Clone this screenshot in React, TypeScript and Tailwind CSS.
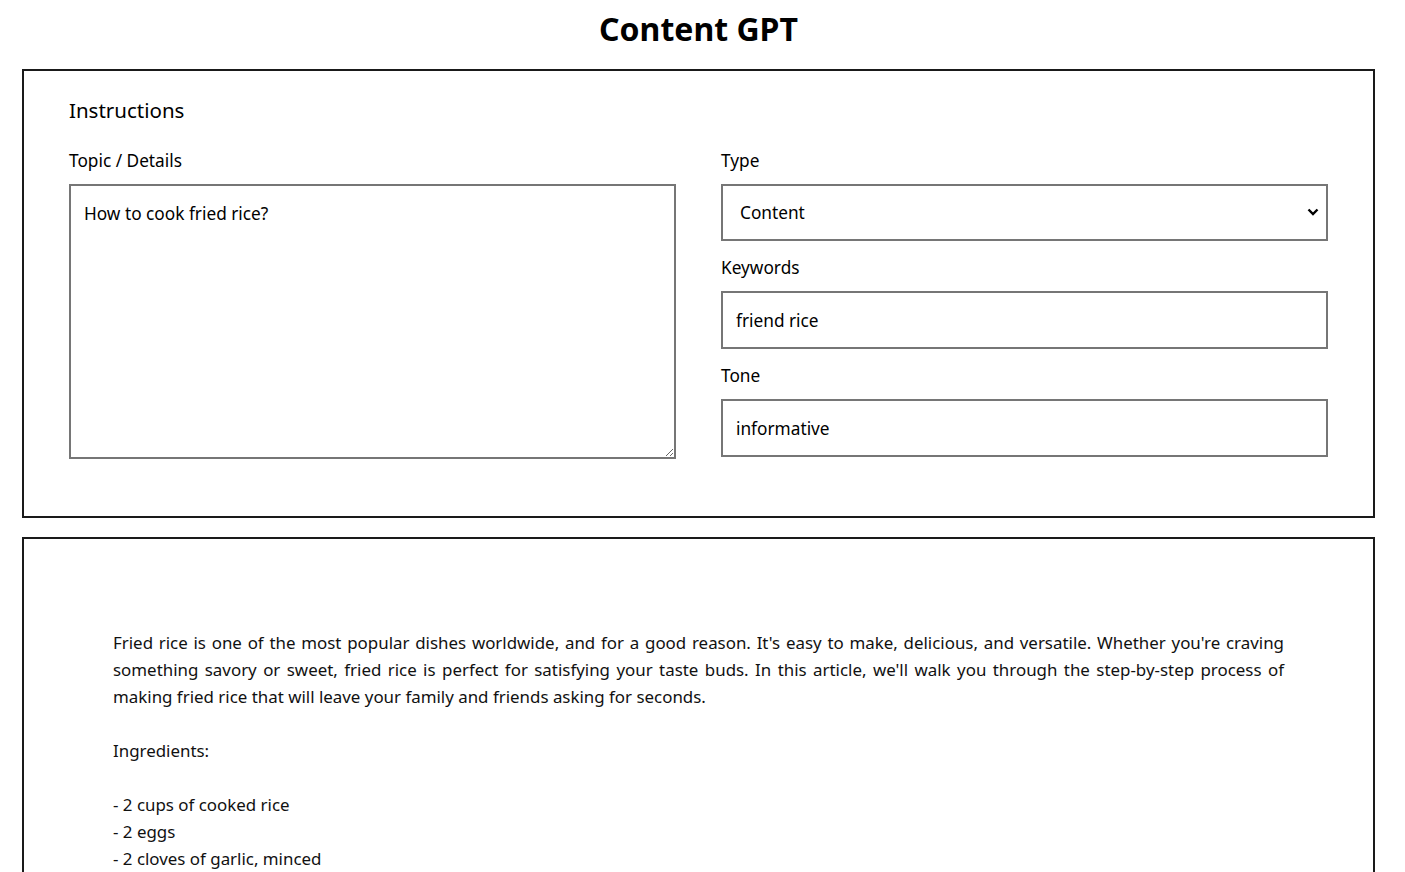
import { useState } from "react";

const article = `Fried rice is one of the most popular dishes worldwide, and for a good reason. It's easy to make, delicious, and versatile. Whether you're craving something savory or sweet, fried rice is perfect for satisfying your taste buds. In this article, we'll walk you through the step-by-step process of making fried rice that will leave your family and friends asking for seconds.

Ingredients:

- 2 cups of cooked rice
- 2 eggs
- 2 cloves of garlic, minced
- 1 small onion, diced
- 1 cup of mixed vegetables
- 2 tablespoons of soy sauce`;

const App = () => {
  const [topic, setTopic] = useState("How to cook fried rice?");
  const [type, setType] = useState("Content");
  const [keywords, setKeywords] = useState("friend rice");
  const [tone, setTone] = useState("informative");

  return (
    <div className="min-h-screen bg-white text-black font-['Segoe_UI','Noto_Sans',sans-serif] pl-[22px] pr-[30px] pb-8">
      <h1 className="text-center text-[32px] font-bold leading-[58px]">Content GPT</h1>

      <section className="border-2 border-[#1a1a1a] mt-[11px] px-[45px] pt-[24px] pb-[57px]">
        <h2 className="text-[20.5px] leading-[30px]">Instructions</h2>
        <div className="grid grid-cols-2 gap-x-[45px] mt-[25px] text-[17.25px]">
          <div className="flex flex-col">
            <label className="leading-[22px] mb-[12px]">Topic / Details</label>
            <textarea
              value={topic}
              onChange={(e) => setTopic(e.target.value)}
              className="border-2 border-[#767676] h-[275px] px-[13px] pt-[17px] pb-[15px] leading-[22px] outline-none resize-y"
            />
          </div>
          <div className="flex flex-col">
            <label className="leading-[22px] mb-[12px]">Type</label>
            <div className="relative">
              <select
                value={type}
                onChange={(e) => setType(e.target.value)}
                className="appearance-none w-full border-2 border-[#767676] h-[57px] px-[17px] bg-white outline-none"
              >
                <option>Content</option>
                <option>Blog</option>
                <option>Article</option>
              </select>
              <svg
                className="absolute right-[9px] top-[24px] pointer-events-none"
                width="12"
                height="8"
                viewBox="0 0 12 8"
              >
                <path d="M1.5 1.5 L6 6 L10.5 1.5" fill="none" stroke="black" strokeWidth="2.4" />
              </svg>
            </div>

            <label className="leading-[22px] mt-[16px] mb-[12px]">Keywords</label>
            <input
              value={keywords}
              onChange={(e) => setKeywords(e.target.value)}
              className="border-2 border-[#767676] h-[58px] px-[13px] outline-none"
            />

            <label className="leading-[22px] mt-[16px] mb-[12px]">Tone</label>
            <input
              value={tone}
              onChange={(e) => setTone(e.target.value)}
              className="border-2 border-[#767676] h-[58px] px-[13px] outline-none"
            />
          </div>
        </div>
      </section>

      <section className="border-2 border-[#1a1a1a] mt-[19px] px-[89px] pt-[90px] pb-[60px]">
        <p className="whitespace-pre-wrap text-justify text-[16.9px] leading-[27px] text-[#111]">{article}</p>
      </section>
    </div>
  );
};

export default App;
